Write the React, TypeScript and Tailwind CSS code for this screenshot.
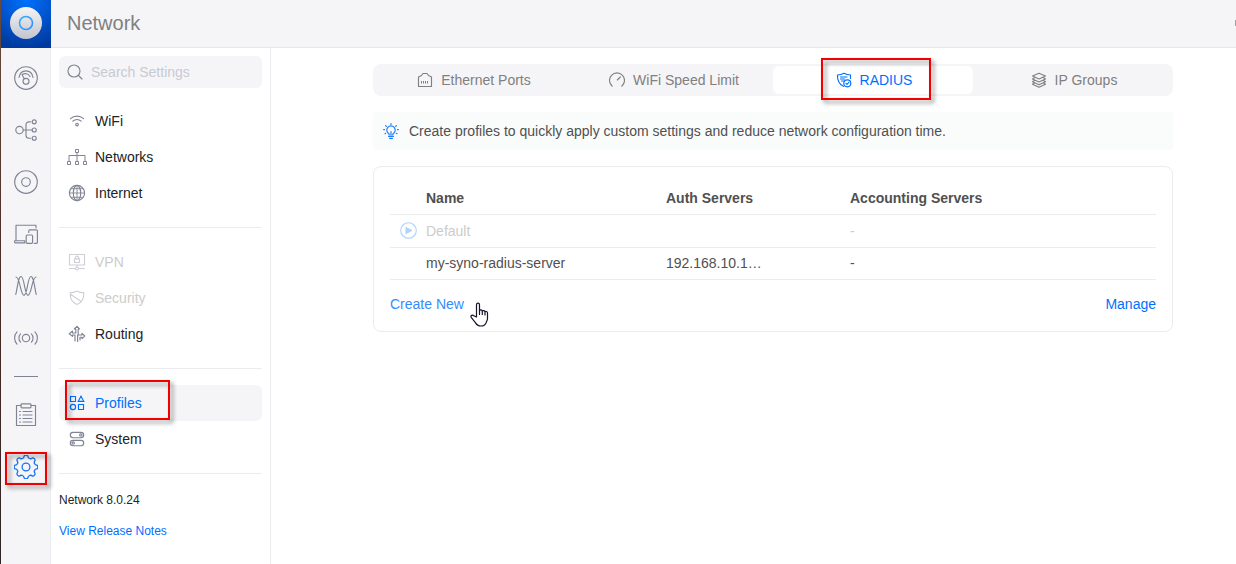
import type { ReactNode } from "react";

type IconProps = { size: number; children: ReactNode; className?: string };

function Icon({ size, children, className = "" }: IconProps) {
  return (
    <svg
      aria-hidden="true"
      width={size}
      height={size}
      viewBox={`0 0 ${size} ${size}`}
      fill="none"
      stroke="currentColor"
      strokeWidth="1.15"
      strokeLinecap="round"
      strokeLinejoin="round"
      className={`shrink-0 ${className}`}
    >
      {children}
    </svg>
  );
}

function gearPath() {
  const point = (deg: number, r: number) => {
    const a = ((deg - 90) * Math.PI) / 180;
    return `${(12 + r * Math.cos(a)).toFixed(2)} ${(12 + r * Math.sin(a)).toFixed(2)}`;
  };
  let d = `M${point(-10, 11)}`;
  for (let k = 0; k < 8; k++) {
    const a = k * 45;
    d += `A2.3 2.3 0 0 1 ${point(a + 10, 11)}A2.6 2.6 0 0 0 ${point(a + 35, 11)}`;
  }
  return `${d}Z`;
}

const railTop = [
  {
    label: "Dashboard",
    icon: (
      <>
        <circle cx="12" cy="12" r="11.3" />
        <circle cx="12" cy="15.3" r="3" />
        <path d="M10.300 12.800 8 8.700M5 11.500C6.500 2.700 17.500 2.700 19 11.500M8 8.700c2.700-1.900 6.200-1.300 8 1.800" />
      </>
    ),
  },
  {
    label: "Topology",
    icon: (
      <>
        <circle cx="5.5" cy="12" r="3.7" />
        <circle cx="20.2" cy="3.8" r="2" />
        <circle cx="20.2" cy="12" r="2" />
        <circle cx="20.2" cy="20.2" r="2" />
        <path d="M9.3 12h8.7M16.5 3.800H15a3 3 0 0 0-3 3v10.4a3 3 0 0 0 3 3h1.5" />
      </>
    ),
  },
  {
    label: "Devices",
    icon: (
      <>
        <circle cx="12" cy="12" r="11.3" />
        <circle cx="12" cy="12" r="4.3" />
      </>
    ),
  },
  {
    label: "Clients",
    icon: (
      <>
        <path d="M2 18V3.2h20v2.6M.6 18.7h10.2v2.2H1.6c-.7 0-1-.6-1-1z" />
        <path d="M14.8 10.5V8.8c0-.6.4-1 1-1h6.600c.6 0 1 .4 1 1v11.600c0 .5-.4.9-1 .9h-2.2" />
        <rect x="12.2" y="13" width="6.4" height="8.3" rx="1" />
      </>
    ),
  },
  {
    label: "Radios",
    icon: (
      <path d="M1.800 20.500C4 10 4.500 2.500 7 2.500C10.500 2.500 10.500 21.300 14 21.300C17.500 21.300 18 3 22 3M2 3C6 3 6.500 21.300 10 21.300C13.500 21.300 13.500 2.500 17 2.500C19.500 2.500 20 10 22.200 20.500" />
    ),
  },
  {
    label: "System Log",
    icon: (
      <>
        <circle cx="12" cy="12" r="3.7" />
        <path d="M6.600 7.800c-2.200 2.300-2.200 6.100 0 8.400M17.400 7.800c2.200 2.300 2.200 6.100 0 8.400M3 5.800c-3.200 3.500-3.200 8.900 0 12.400M21 5.800c3.200 3.500 3.200 8.900 0 12.400" />
      </>
    ),
  },
];

const wifiIcon = (
  <>
    <path d="M2.500 6.700c3.700-3.500 9.300-3.500 13 0M4.800 9.200c2.400-2.200 6-2.200 8.400 0" />
    <circle cx="9" cy="12.500" r="1.300" />
  </>
);
const networksIcon = (
  <>
    <path d="M10 5v9M2 14V7.500h16V14" />
    <path d="M8.500 1.500h3v3h-3zM.5 13.500h3v3h-3zM8.500 13.500h3v3h-3zM16.500 13.500h3v3h-3z" fill="white" />
  </>
);
const internetIcon = (
  <>
    <circle cx="9" cy="9" r="7.600" />
    <ellipse cx="9" cy="9" rx="3.700" ry="7.600" />
    <path d="M9 1.400v15.200M1.400 9h15.200M3 4.700h12M3 13.300h12" strokeWidth=".9" />
  </>
);
const vpnIcon = (
  <>
    <path d="M1.500 1.500h15v10.500h-15zM1.500 15.500h5M11.500 15.500h5M9 12v2" />
    <path d="M6.500 5.800h5v3.700h-5zM7.500 5.800V4.600a1.500 1.500 0 0 1 3 0v1.200" />
    <circle cx="9" cy="15.500" r="1.500" />
  </>
);
const securityIcon = (
  <path d="M9 2c2 1.300 4.300 1.800 6.800 1.500.3 5.500-1 9.800-6.800 12-5.800-2.200-7.100-6.500-6.800-12C4.700 3.800 7 3.300 9 2zM2.500 5.200l10.700 7.300" />
);
const routingIcon = (
  <path d="M9 1.300 6.300 4h1.500v4H4.500V6L1.300 8.700l3.200 2.700V10H7v6M9 1.300 11.500 4h-1.300v6H14V8.300l2.800 2.700-2.800 2.700v-1.500h-2V15M9.600 16.500V10" />
);
const profilesIcon = (
  <>
    <path d="M2.500 2.500h5v5h-5zM10.500 10.500h5v5h-5zM13 2.300l2.800 5h-5.600z" strokeLinejoin="miter" />
    <circle cx="5" cy="13" r="2.600" />
  </>
);
const systemIcon = (
  <>
    <rect x="2.300" y="2.300" width="13.400" height="5.400" rx="2.700" />
    <rect x="2.300" y="10.300" width="13.400" height="5.400" rx="2.700" />
    <circle cx="12.800" cy="5" r="1.200" />
    <circle cx="5.200" cy="13" r="1.200" />
  </>
);

type MenuItem = { label: string; icon: ReactNode; wide?: boolean; disabled?: boolean; active?: boolean };

const groups: MenuItem[][] = [
  [
    { label: "WiFi", icon: wifiIcon },
    { label: "Networks", icon: networksIcon, wide: true },
    { label: "Internet", icon: internetIcon },
  ],
  [
    { label: "VPN", icon: vpnIcon, disabled: true },
    { label: "Security", icon: securityIcon, disabled: true },
    { label: "Routing", icon: routingIcon },
  ],
  [
    { label: "Profiles", icon: profilesIcon, active: true },
    { label: "System", icon: systemIcon },
  ],
];

const tabs = [
  {
    label: "Ethernet Ports",
    icon: (
      <>
        <path d="M1.500 14.500V5l3-1.500 1.500-2h4l1.500 2 3 1.500v9.500z" />
        <path d="M4.500 9v2.500M6.500 9v2.500M8.500 9v2.500M10.500 9v2.500" strokeWidth="1" strokeLinecap="butt" />
      </>
    ),
  },
  {
    label: "WiFi Speed Limit",
    icon: <path d="M3.200 14.200a7.500 7.500 0 1 1 9.600 0M8.300 8l3-3" />,
  },
  {
    label: "RADIUS",
    active: true,
    icon: (
      <>
        <path d="M7.500 14.300C3 12.300 1.300 9 1.500 3c2.500 0 4.500-.5 6.500-1.700C10 2.500 12 3 14.500 3v3.500" />
        <path d="M4.500 5h6.500M4.500 7h4M5.500 9h2" />
        <circle cx="11.300" cy="11.300" r="3.500" />
        <path d="m9.900 11.400 1.100 1 1.800-2" />
      </>
    ),
  },
  {
    label: "IP Groups",
    icon: (
      <path d="M8 1.200 14.500 4 8 7 1.500 4zM3.500 5.800l-2 1.200L8 10l6.500-3-2-1.200M3.500 8.600l-2 1.200L8 12.800l6.500-3-2-1.200M3.500 11l-2 1.200L8 15.200l6.500-3-2-1.200" />
    ),
  },
];

function Highlight({ className }: { className: string }) {
  return (
    <span
      aria-hidden="true"
      className={`pointer-events-none absolute z-10 border-2 border-[#f00000] drop-shadow-[3px_3px_2px_rgba(0,0,0,0.45)] ${className}`}
    />
  );
}

function Logo() {
  return (
    <svg width="50" height="48" viewBox="0 0 50 48" role="img" aria-label="UniFi" className="shrink-0">
      <defs>
        <radialGradient id="logo-bg" cx=".5" cy="0" r="1">
          <stop offset="0" stopColor="#0071ff" />
          <stop offset="1" stopColor="#003a9f" />
        </radialGradient>
        <linearGradient id="logo-disc" x1="0" y1="0" x2="0" y2="1">
          <stop offset="0" stopColor="#f5f5f7" />
          <stop offset="1" stopColor="#c3c5cd" />
        </linearGradient>
        <linearGradient id="logo-ring" x1="0" y1="0" x2="1" y2="1">
          <stop offset="0" stopColor="#2fb4ff" />
          <stop offset="1" stopColor="#2f8cff" />
        </linearGradient>
      </defs>
      <rect width="50" height="48" fill="url(#logo-bg)" />
      <circle cx="25" cy="23" r="16" fill="url(#logo-disc)" />
      <circle cx="25" cy="23" r="6.500" fill="none" stroke="url(#logo-ring)" strokeWidth="1.600" />
    </svg>
  );
}

function Rail() {
  return (
    <nav aria-label="Applications" className="flex w-[50px] shrink-0 flex-col items-center border-r border-[#ebecef] bg-[#f5f5f8] pt-1 text-[#808393]">
      {railTop.map((item) => (
        <button key={item.label} type="button" aria-label={item.label} className="flex h-[52px] w-full items-center justify-center">
          <Icon size={24}>{item.icon}</Icon>
        </button>
      ))}
      <span className="mt-3 h-px w-6 bg-[#808393]" />
      <button type="button" aria-label="Logs" className="mt-3 flex h-[52px] w-full items-center justify-center">
        <Icon size={24}>
          <path d="M7 2.500H2.500v20h19v-20H17" />
          <path d="M7 1.800c0-.5.4-.9.9-.9h8.200c.5 0 .9.4.9.9v2.100c0 .5-.4.9-.9.9H7.900c-.5 0-.9-.4-.9-.9z" />
          <path d="M5.500 8.500h1M9 8.500h9M5.500 12h1M9 12h9M5.500 15.500h1M9 15.500h9M5.500 19h1M9 19h9" />
        </Icon>
      </button>
      <button type="button" aria-label="Settings" className="relative flex h-[52px] w-full items-center justify-center text-[#1473f5]">
        <Icon size={24}>
          <path d={gearPath()} strokeWidth="1.300" />
          <circle cx="12" cy="12" r="3.900" strokeWidth="1.300" />
        </Icon>
        <Highlight className="left-1 top-[11px] h-[33px] w-[42px]" />
      </button>
    </nav>
  );
}

function SettingsMenu() {
  return (
    <aside className="w-[220px] shrink-0 border-r border-[#ebecef] px-2 pt-2">
      <label className="flex h-8 items-center gap-2 rounded-md bg-[#f5f5f8] px-2 text-[#808393]">
        <Icon size={16}>
          <circle cx="7" cy="7" r="6" />
          <path d="m11.500 11.500 3.500 3.500" />
        </Icon>
        <input
          type="search"
          aria-label="Search Settings"
          placeholder="Search Settings"
          className="w-full min-w-0 bg-transparent text-sm outline-none placeholder:text-[#c8cad2]"
        />
      </label>
      <nav aria-label="Settings" className="pt-[15px]">
        {groups.map((group, index) => (
          <ul key={index} className="mb-4 border-b border-[#ebecef] pb-4">
            {group.map((item) => (
              <li key={item.label} className="relative">
                <a
                  href="#"
                  className={`flex h-9 items-center gap-2 rounded-md px-2 text-sm ${
                    item.active ? "bg-[#f5f5f8] text-[#006fff]" : item.disabled ? "text-[#cccccc]" : "text-[#212327]"
                  }`}
                >
                  <span
                    className={`flex w-5 justify-center ${
                      item.active ? "text-[#006fff]" : item.disabled ? "text-[#cfd0d5]" : "text-[#808393]"
                    }`}
                  >
                    {item.wide ? (
                      <svg aria-hidden="true" width="20" height="18" viewBox="0 0 20 18" fill="none" stroke="currentColor">
                        {item.icon}
                      </svg>
                    ) : (
                      <Icon size={18}>{item.icon}</Icon>
                    )}
                  </span>
                  {item.label}
                </a>
                {item.active && <Highlight className="-top-[5px] left-1.5 h-10 w-[105px]" />}
              </li>
            ))}
          </ul>
        ))}
      </nav>
      <p className="mt-4 text-xs leading-5 text-[#212327]">Network 8.0.24</p>
      <a href="#" className="mt-[11px] block text-xs leading-5 text-[#006fff]">
        View Release Notes
      </a>
    </aside>
  );
}

function Tabs() {
  return (
    <div role="tablist" className="grid h-8 grid-cols-4 rounded-lg bg-[#f5f5f8] py-0.5">
      {tabs.map((tab) => (
        <button
          key={tab.label}
          type="button"
          role="tab"
          aria-selected={!!tab.active}
          className={`relative flex items-center justify-center gap-2 rounded-md pl-0.5 text-sm ${
            tab.active ? "bg-white text-[#006fff]" : "text-[#808080]"
          }`}
        >
          <Icon size={16}>{tab.icon}</Icon>
          {tab.label}
          {tab.active && <Highlight className="-top-2 left-12 h-[42px] w-[110px]" />}
        </button>
      ))}
    </div>
  );
}

function HandCursor() {
  return (
    <svg aria-hidden="true" width="19" height="25" viewBox="0 0 19 25" className="pointer-events-none absolute left-full top-2 ml-1.5">
      <path
        d="M6.500 15V2.700c0-2.200 3-2.200 3 0v6.100c.3-1.300 2.600-1.100 2.800.4.4-1 2.500-.8 2.700.7.5-.9 2.500-.6 2.500 1.100v5.500c0 1.800-1 2.800-1.400 4.200-.8 2-2.300 3.300-5 3.300-3.100 0-4.400-1-5.700-3.400L1.200 15.300c-.8-1.700 1.300-2.900 2.600-1.500z"
        fill="white"
        stroke="#14142b"
        strokeWidth="1.200"
        strokeLinejoin="round"
      />
      <path d="M9.500 8.500v4M12.300 9.500v3M15 10.500v2.500" stroke="#14142b" strokeWidth="1.200" strokeLinecap="round" />
    </svg>
  );
}

function ServersCard() {
  return (
    <section className="mt-4 rounded-lg border border-[#ebecef] px-4 pb-[17px] pt-4 text-sm text-[#505050]">
      <table className="w-full table-fixed border-collapse text-left">
        <colgroup>
          <col className="w-9" />
          <col className="w-[240px]" />
          <col className="w-[184px]" />
          <col />
        </colgroup>
        <thead>
          <tr className="h-[31px] border-b border-[#ebecef]">
            <td />
            <th scope="col" className="p-0 font-bold">Name</th>
            <th scope="col" className="p-0 font-bold">Auth Servers</th>
            <th scope="col" className="p-0 font-bold">Accounting Servers</th>
          </tr>
        </thead>
        <tbody>
          <tr className="h-[33px] border-b border-[#ebecef] text-[#cccccc]">
            <td className="p-0 pl-[10px] text-[#b2d3ff]">
              <Icon size={17}>
                <circle cx="8.500" cy="8.500" r="7.800" />
                <path d="M6 5.500v6l5.700-3z" fill="currentColor" />
              </Icon>
            </td>
            <td className="p-0">Default</td>
            <td className="p-0" />
            <td className="p-0">-</td>
          </tr>
          <tr className="h-8 border-b border-[#ebecef]">
            <td />
            <td className="p-0">my-syno-radius-server</td>
            <td className="p-0">192.168.10.1…</td>
            <td className="p-0">-</td>
          </tr>
        </tbody>
      </table>
      <div className="mt-[14px] flex items-center justify-between">
        <span className="relative">
          <button type="button" className="text-[#338cff]">Create New</button>
          <HandCursor />
        </span>
        <button type="button" className="text-[#006fff]">Manage</button>
      </div>
    </section>
  );
}

export default function App() {
  return (
    <div className="flex min-h-screen bg-white font-['Liberation_Sans',Arial,sans-serif]">
      <div className="w-px shrink-0 bg-linear-to-b from-[#6b4a3c] via-[#4a2b26] to-[#2e2524]" />
      <div className="flex min-w-0 flex-1 flex-col">
        <header className="flex h-12 shrink-0 items-center bg-[#f5f5f8]">
          <Logo />
          <div className="flex h-full flex-1 items-center justify-between border-b border-[#e6e7ea] pb-0.5 pl-4">
            <h1 className="text-xl text-[#808080]">Network</h1>
            <span className="h-1.5 w-px bg-[#a0a0a0]" />
          </div>
        </header>
        <div className="flex flex-1">
          <Rail />
          <SettingsMenu />
          <main className="min-w-0 flex-1 pl-[102px] pr-[63px] pt-4">
            <div className="max-w-[800px]">
              <Tabs />
              <div className="mt-4 flex h-[38px] items-center gap-2.5 rounded bg-[#fafcfb] px-[10px] text-sm text-[#505050]">
                <Icon size={16} className="text-[#1a7dff]">
                  <path d="M6 12v-1.200a4.200 4.200 0 1 1 4 0V12z" />
                  <path d="M5.500 13.500h5M6.500 15.300h3M8 11V8.500M8 .6v.9M2.600 2.700l.8.7M13.400 2.700l-.8.7M.6 6.600h1M14.400 6.600h1M2 10.700l.7-.4M14 10.700l-.7-.4" />
                </Icon>
                Create profiles to quickly apply custom settings and reduce network configuration time.
              </div>
              <ServersCard />
            </div>
          </main>
        </div>
      </div>
    </div>
  );
}
